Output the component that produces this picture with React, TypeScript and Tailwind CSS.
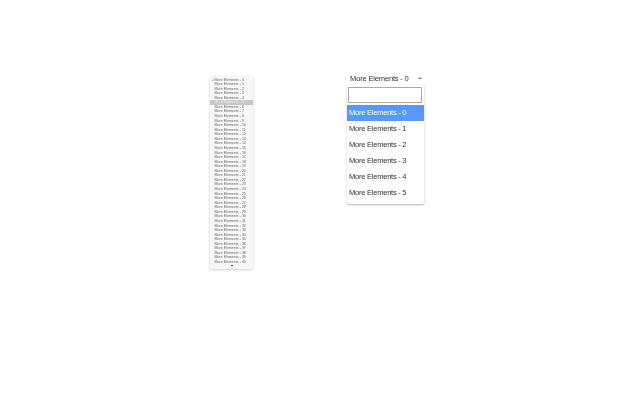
const NATIVE_ROWS = Array.from({ length: 41 }, (_, i) => i);
const LIST_ROWS = [1, 2, 3, 4, 5];

/* Left: the native popup menu, shrunk down. Right: the searchable dropdown, opened.
   The light blur is there because the reference is a scaled-down capture. */
function NativeMenu() {
  return (
    <div className="mt-[4px] flex h-[193px] w-[43px] flex-col rounded-[2px] bg-[#f7f7f7] pt-[1.5px] shadow-[0_1px_3px_rgba(0,0,0,0.18)] blur-[0.2px]">
      {NATIVE_ROWS.map((i) => (
        <div
          key={i}
          className={`relative h-[4.57px] whitespace-nowrap pl-[4.5px] text-[3.6px] leading-[4.57px] ${
            i === 5 ? 'bg-[#c8c8c8] text-[#ececec]' : 'text-[#666]'
          }`}
        >
          {i === 0 && <span className="absolute left-[1.5px] top-0 text-[3px] text-[#111]">✓</span>}
          More Elements - {i}
        </div>
      ))}
      <div className="mt-[0.5px] flex justify-center">
        <div className="h-0 w-0 border-x-[1.5px] border-t-[2px] border-x-transparent border-t-[#333]" />
      </div>
    </div>
  );
}

function SearchSelect() {
  return (
    <div className="ml-[94px] w-[77px] text-[7.6px] tracking-[-0.28px] text-[#333] blur-[0.2px]">
      <div className="flex h-[13px] items-center justify-between pl-[3px] pr-[2px] leading-[13px]">
        <span className="whitespace-nowrap tracking-[-0.2px]">More Elements - 0</span>
        <div className="mb-[1px] h-0 w-0 border-x-[2px] border-b-[2px] border-x-transparent border-b-[#777]" />
      </div>
      <div className="rounded-b-[2px] bg-white pb-[3px] shadow-[0_1px_2px_rgba(0,0,0,0.3)]">
        <div className="px-[1px] py-[2px]">
          <div className="h-[16px] w-[74px] border-[1.5px] border-[#aaa] bg-white" />
        </div>
        <div className="h-[16px] whitespace-nowrap bg-[#5897fb] pl-[2px] leading-[16px] text-white">More Elements - 0</div>
        {LIST_ROWS.map((i) => (
          <div key={i} className="h-[16px] whitespace-nowrap pl-[2px] leading-[16px]">
            More Elements - {i}
          </div>
        ))}
      </div>
    </div>
  );
}

export default function App() {
  return (
    <div className="flex h-[400px] w-[640px] items-start bg-white pl-[210px] pt-[72px] font-['Liberation_Sans',Arial,sans-serif]">
      <NativeMenu />
      <SearchSelect />
    </div>
  );
}
